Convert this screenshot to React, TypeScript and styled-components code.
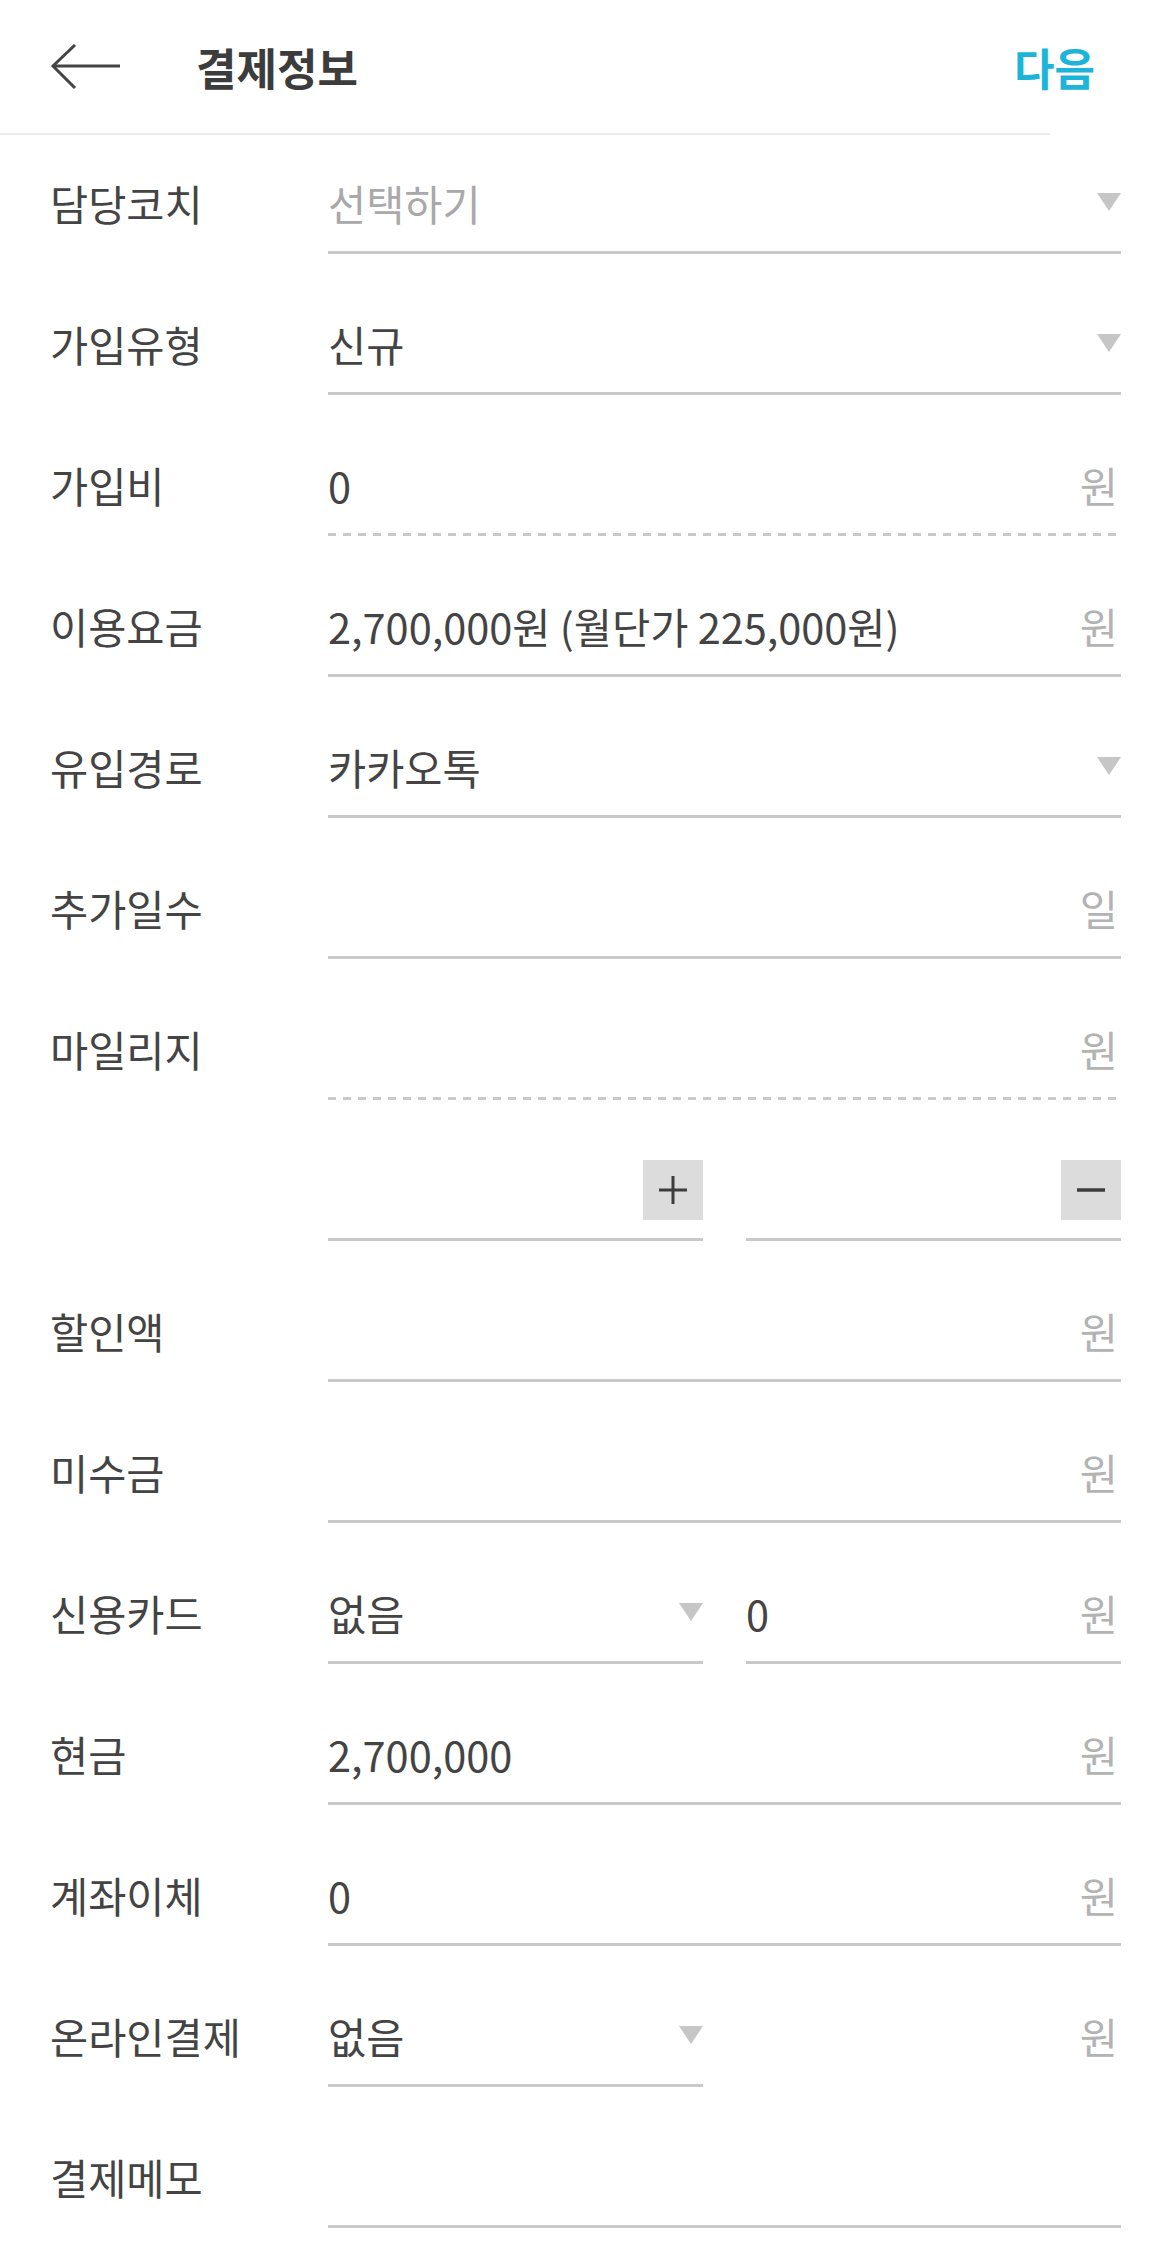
import styled, { createGlobalStyle } from "styled-components"

const GlobalStyle = createGlobalStyle`
	body {
		margin: 0;
		background-color: #ffffff;
		font-family: "Noto Sans CJK KR", "Noto Sans", sans-serif;
	}
`

const Page = styled.div`
	width: 1170px;
	padding-bottom: 20px;
`

const Header = styled.header`
	display: flex;
	align-items: center;
	height: 133px;
	padding: 0 75px 0 50px;
	box-sizing: border-box;
`

const BackButton = styled.button`
	display: flex;
	padding: 0;
	border: none;
	background: none;
	cursor: pointer;
`

const Title = styled.h1`
	margin: 0 0 0 74px;
	font-size: 44px;
	font-weight: 700;
	color: #3c3c3c;
`

const NextButton = styled.button`
	margin-left: auto;
	padding: 0;
	border: none;
	background: none;
	font-family: inherit;
	font-size: 44px;
	font-weight: 700;
	color: #1cb5d9;
	cursor: pointer;
`

const HeaderLine = styled.div`
	height: 2px;
	margin-right: 120px;
	background-color: #ebebeb;
`

const Form = styled.div`
	display: flex;
	flex-direction: column;
	gap: 45px;
	padding: 23px 49px 0 50px;
`

const Row = styled.div`
	display: grid;
	grid-template-columns: 278px 1fr;
	align-items: start;
`

const Label = styled.span`
	height: 90px;
	line-height: 90px;
	font-size: 41.5px;
	color: #444444;
	white-space: nowrap;
`

const Pair = styled.div`
	display: grid;
	grid-template-columns: 1fr 1fr;
	column-gap: 43px;
`

const Field = styled.div<{ $line?: "solid" | "dashed" | "none" }>`
	display: flex;
	align-items: center;
	height: 96px;
	box-sizing: border-box;
	padding-bottom: 6px;
	background: ${({ $line = "solid" }) =>
		$line === "solid"
			? "linear-gradient(#c9c9c9, #c9c9c9) left bottom / 100% 3px no-repeat"
			: $line === "dashed"
				? "repeating-linear-gradient(to right, #c9c9c9 0 8px, transparent 8px 15px) left bottom / calc(100% - 3px) 3px no-repeat"
				: "none"};
`

const Value = styled.span<{ $placeholder?: boolean }>`
	flex: 1;
	font-size: 41.5px;
	color: ${({ $placeholder }) => ($placeholder ? "#a9a9a9" : "#444444")};
	white-space: nowrap;
`

const Unit = styled.span`
	margin-right: 3px;
	font-size: 41.5px;
	color: #b3b3b3;
`

const Caret = styled.span`
	width: 0;
	height: 0;
	margin-bottom: 2px;
	border-left: 12px solid transparent;
	border-right: 12px solid transparent;
	border-top: 18px solid #c6c6c6;
`

const StepButton = styled.button`
	display: flex;
	align-items: center;
	justify-content: center;
	width: 60px;
	height: 60px;
	margin-left: auto;
	padding: 0;
	border: none;
	background-color: #dcdcdc;
	cursor: pointer;
`

type FieldProps = {
	value?: string
	placeholder?: string
	unit?: string
	select?: boolean
	line?: "solid" | "dashed" | "none"
}

function InputField({ value, placeholder, unit, select, line }: FieldProps) {
	return (
		<Field $line={line}>
			<Value $placeholder={!value && !!placeholder}>{value || placeholder}</Value>
			{select && <Caret/>}
			{unit && <Unit>{unit}</Unit>}
		</Field>
	)
}

function BackArrow() {
	return (
		<svg width="72" height="46" viewBox="0 0 72 46" fill="none" stroke="#444444" strokeWidth="3">
			<path d="M70 22H3"/>
			<path d="M25 1L3 22L25 44"/>
		</svg>
	)
}

function PlusIcon() {
	return (
		<svg width="28" height="28" viewBox="0 0 28 28" stroke="#3c3c3c" strokeWidth="3">
			<path d="M0 14H28M14 0V28"/>
		</svg>
	)
}

function MinusIcon() {
	return (
		<svg width="28" height="28" viewBox="0 0 28 28" stroke="#3c3c3c" strokeWidth="3.5">
			<path d="M0 14H28"/>
		</svg>
	)
}

export default function App() {
	return (<>
		<GlobalStyle/>
		<Page>
			<Header>
				<BackButton aria-label="뒤로">
					<BackArrow/>
				</BackButton>
				<Title>결제정보</Title>
				<NextButton>다음</NextButton>
			</Header>
			<HeaderLine/>
			<Form>
				<Row>
					<Label>담당코치</Label>
					<InputField placeholder="선택하기" select/>
				</Row>
				<Row>
					<Label>가입유형</Label>
					<InputField value="신규" select/>
				</Row>
				<Row>
					<Label>가입비</Label>
					<InputField value="0" unit="원" line="dashed"/>
				</Row>
				<Row>
					<Label>이용요금</Label>
					<InputField value="2,700,000원 (월단가 225,000원)" unit="원"/>
				</Row>
				<Row>
					<Label>유입경로</Label>
					<InputField value="카카오톡" select/>
				</Row>
				<Row>
					<Label>추가일수</Label>
					<InputField unit="일"/>
				</Row>
				<Row>
					<Label>마일리지</Label>
					<InputField unit="원" line="dashed"/>
				</Row>
				<Row>
					<Label/>
					<Pair>
						<Field>
							<StepButton aria-label="추가"><PlusIcon/></StepButton>
						</Field>
						<Field>
							<StepButton aria-label="차감"><MinusIcon/></StepButton>
						</Field>
					</Pair>
				</Row>
				<Row>
					<Label>할인액</Label>
					<InputField unit="원"/>
				</Row>
				<Row>
					<Label>미수금</Label>
					<InputField unit="원"/>
				</Row>
				<Row>
					<Label>신용카드</Label>
					<Pair>
						<InputField value="없음" select/>
						<InputField value="0" unit="원"/>
					</Pair>
				</Row>
				<Row>
					<Label>현금</Label>
					<InputField value="2,700,000" unit="원"/>
				</Row>
				<Row>
					<Label>계좌이체</Label>
					<InputField value="0" unit="원"/>
				</Row>
				<Row>
					<Label>온라인결제</Label>
					<Pair>
						<InputField value="없음" select/>
						<InputField unit="원" line="none"/>
					</Pair>
				</Row>
				<Row>
					<Label>결제메모</Label>
					<InputField/>
				</Row>
			</Form>
		</Page>
	</>)
}
